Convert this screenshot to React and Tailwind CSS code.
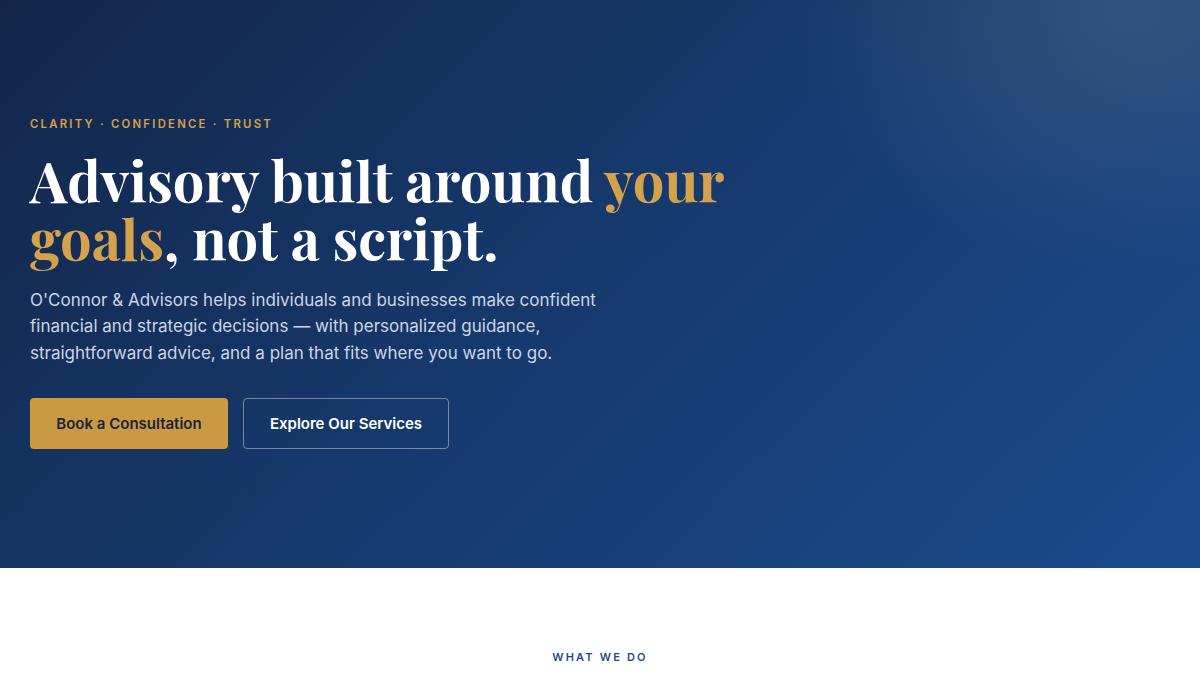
export default function App() {
  return (
    <div className="min-h-screen bg-white" style={{ fontFamily: "Inter, 'Noto Sans', sans-serif" }}>
      {/* Hero */}
      <section className="h-[568px] bg-[radial-gradient(ellipse_340px_260px_at_1130px_10px,rgba(130,140,150,0.26),transparent),linear-gradient(135deg,#13264a_0%,#163a6e_50%,#1a4a8c_100%)]">
        <div className="px-[30px] pt-[116px]">
          <p className="text-[11.3px] font-semibold uppercase tracking-[0.2em] text-[#d4a24c]">
            Clarity · Confidence · Trust
          </p>
          <h1
            className="mt-[18px] text-[56px] font-bold leading-[58px] text-white"
            style={{ fontFamily: "'Playfair Display', 'DejaVu Serif', 'Liberation Serif', serif" }}
          >
            Advisory built around <span className="text-[#d4a24c]">your</span>
            <br />
            <span className="text-[#d4a24c]">goals</span>, not a script.
          </h1>
          <p className="mt-[20px] max-w-[600px] text-[17px] leading-[26.5px] text-[#cdd6e4]">
            O'Connor &amp; Advisors helps individuals and businesses make confident financial and strategic decisions — with personalized guidance, straightforward advice, and a plan that fits where you want to go.
          </p>
          <div className="mt-[32px] flex gap-[15px]">
            <button className="h-[51px] w-[198px] rounded-[4px] bg-[#c99a42] text-[15px] font-semibold text-[#1a2438]">
              Book a Consultation
            </button>
            <button className="h-[51px] w-[206px] rounded-[4px] border border-white/40 text-[15px] font-semibold text-white">
              Explore Our Services
            </button>
          </div>
        </div>
      </section>

      {/* What we do */}
      <section className="pt-[81px] text-center">
        <p className="text-[11px] font-semibold uppercase tracking-[0.2em] text-[#1f4a8a]">
          What We Do
        </p>
      </section>
    </div>
  );
}
